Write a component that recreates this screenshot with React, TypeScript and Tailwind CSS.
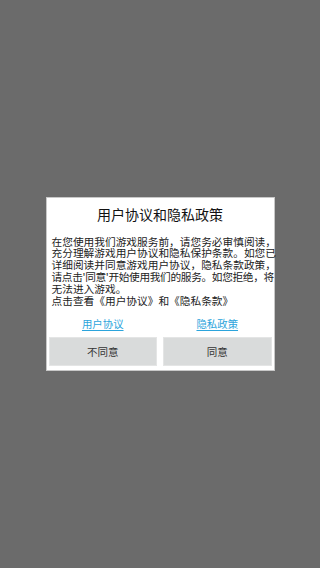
import React from 'react';

const lines = [
  '在您使用我们游戏服务前，请您务必审慎阅读，',
  '充分理解游戏用户协议和隐私保护条款。如您已',
  '详细阅读并同意游戏用户协议，隐私条款政策，',
  "请点击'同意'开始使用我们的服务。如您拒绝，将",
  '无法进入游戏。',
  '点击查看《用户协议》和《隐私条款》',
];

const App: React.FC = () => {
  return (
    <div
      className="min-h-screen w-full bg-[#6b6b6b] flex items-center justify-center"
      style={{ fontFamily: '"Noto Sans CJK SC", "Noto Sans", sans-serif' }}
    >
      <div className="w-[229px] bg-white border border-[#c8c8c8] flex flex-col">
        {/* Title */}
        <div className="pt-[6px] text-center text-[14px] leading-[20px] text-[#111]">
          用户协议和隐私政策
        </div>

        {/* Body */}
        <div className="mt-[12px] pl-[5px] text-[10.7px] leading-[11.8px] text-[#222]">
          {lines.map((l, i) => (
            <div key={i} className={i === 3 ? 'whitespace-nowrap tracking-[-0.35px]' : 'whitespace-nowrap'}>{l}</div>
          ))}
        </div>

        {/* Links */}
        <div className="mt-[11px] grid grid-cols-2 gap-[6px] px-[2px] text-[10.4px] leading-[14px]">
          <a href="#" className="text-center text-[#2ba4dc] underline underline-offset-2">用户协议</a>
          <a href="#" className="text-center text-[#2ba4dc] underline underline-offset-2">隐私政策</a>
        </div>

        {/* Buttons */}
        <div className="mt-[6px] mb-[4px] grid grid-cols-2 gap-[6px] px-[2px]">
          <button className="h-[29px] bg-[#d9dbdb] border border-[#e4e5e5] text-[10.5px] text-[#333]">不同意</button>
          <button className="h-[29px] bg-[#d9dbdb] border border-[#e4e5e5] text-[10.5px] text-[#333]">同意</button>
        </div>
      </div>
    </div>
  );
};

export default App;
